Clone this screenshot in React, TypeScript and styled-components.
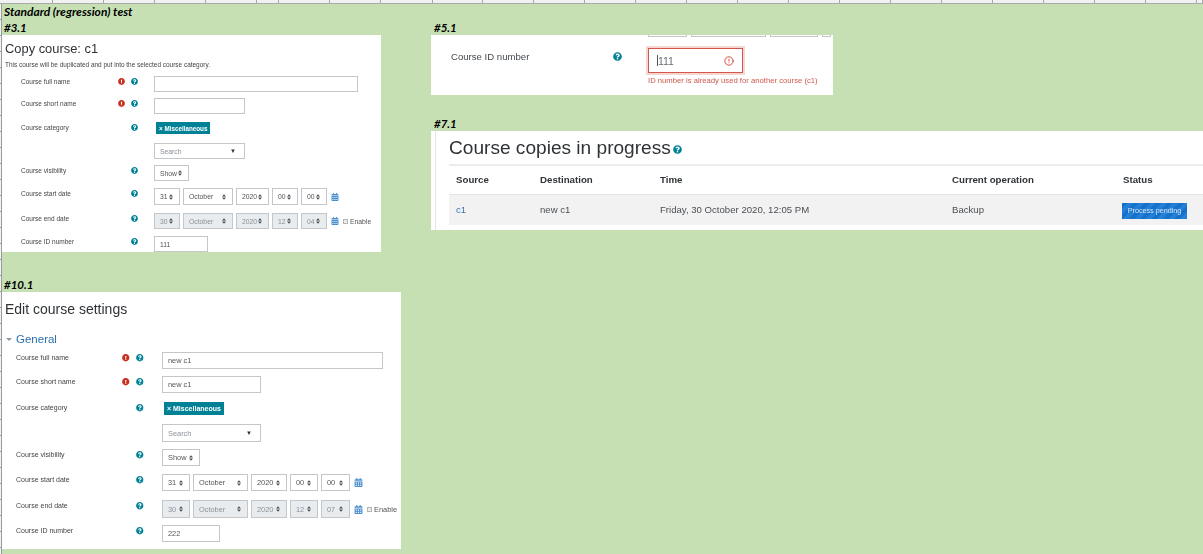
import React from 'react';
import styled, { createGlobalStyle } from 'styled-components';
import { FaCalendarAlt, FaExclamationCircle, FaQuestionCircle } from 'react-icons/fa';
import { FiAlertCircle } from 'react-icons/fi';

const GlobalStyle = createGlobalStyle`
  html, body {
    margin: 0;
    padding: 0;
    background: #fff;
  }
`;

// spreadsheet column widths along the top edge
const COLUMN_WIDTHS = [53, 51, 51, 51, 51, 22, 51, 51, 52, 50, 51, 51, 51, 51, 51, 51, 51, 51, 51, 51, 51, 51, 51, 51, 6];

interface Row {
  label: string;
  mt: number;
  h: number;
  required?: boolean;
  control: React.ReactNode;
}

const Help = () => (
  <HelpIcon>
    <FaQuestionCircle />
  </HelpIcon>
);

const Required = () => (
  <RequiredIcon>
    <FaExclamationCircle />
  </RequiredIcon>
);

const Carets = () => (
  <svg width="4" height="6" viewBox="0 0 5 7">
    <path d="M2.5 0 L5 2.8 H0 Z M2.5 7 L0 4.2 H5 Z" fill="#495057" />
  </svg>
);

const DateFields = (props: { values: string[]; widths: number[]; disabled?: boolean; enable?: boolean }) => (
  <DateRow>
    {props.values.map((value, i) => (
      <SelectBox key={i} $w={props.widths[i]} $disabled={props.disabled}>
        {value}
        <Carets />
      </SelectBox>
    ))}
    <CalendarIcon>
      <FaCalendarAlt />
    </CalendarIcon>
    {props.enable ? (
      <EnableLabel>
        <CheckMark />
        Enable
      </EnableLabel>
    ) : null}
  </DateRow>
);

const CategoryField = (props: { searchW: number; searchH: number }) => (
  <CategoryStack>
    <Badge>× Miscellaneous</Badge>
    <SearchBox $w={props.searchW} $h={props.searchH}>
      Search
      <DownArrow>▼</DownArrow>
    </SearchBox>
  </CategoryStack>
);

const getCopyRows = (): Row[] => {
  const widths = [26, 50, 33, 26, 26];
  return [
    { label: 'Course full name', mt: 7, h: 16, required: true, control: <TextBox $w={204} /> },
    { label: 'Course short name', mt: 6, h: 16, required: true, control: <TextBox $w={91} /> },
    { label: 'Course category', mt: 8, h: 37, control: <CategoryField searchW={91} searchH={16} /> },
    { label: 'Course visibility', mt: 6, h: 16, control: <SelectBox $w={35}>Show<Carets /></SelectBox> },
    { label: 'Course start date', mt: 7, h: 17, control: <DateFields values={['31', 'October', '2020', '00', '00']} widths={widths} /> },
    { label: 'Course end date', mt: 8, h: 16, control: <DateFields values={['30', 'October', '2020', '12', '04']} widths={widths} disabled enable /> },
    { label: 'Course ID number', mt: 7, h: 16, control: <TextBox $w={54}>111</TextBox> },
  ];
};

const getEditRows = (): Row[] => {
  const widths = [28, 55, 36, 28, 29];
  return [
    { label: 'Course full name', mt: 6, h: 17, required: true, control: <TextBox $w={221}>new c1</TextBox> },
    { label: 'Course short name', mt: 7, h: 17, required: true, control: <TextBox $w={99}>new c1</TextBox> },
    { label: 'Course category', mt: 9, h: 40, control: <CategoryField searchW={99} searchH={18} /> },
    { label: 'Course visibility', mt: 7, h: 17, control: <SelectBox $w={38}>Show<Carets /></SelectBox> },
    { label: 'Course start date', mt: 8, h: 17, control: <DateFields values={['31', 'October', '2020', '00', '00']} widths={widths} /> },
    { label: 'Course end date', mt: 9, h: 18, control: <DateFields values={['30', 'October', '2020', '12', '07']} widths={widths} disabled enable /> },
    { label: 'Course ID number', mt: 7, h: 17, control: <TextBox $w={58}>222</TextBox> },
  ];
};

const FormRows = (props: { rows: Row[] }) => (
  <>
    {props.rows.map((row) => (
      <FormRow key={row.label} $mt={row.mt} $h={row.h}>
        <FieldLabel>{row.label}</FieldLabel>
        <IconCell>{row.required ? <Required /> : null}</IconCell>
        <IconCell>
          <Help />
        </IconCell>
        <ControlCell>{row.control}</ControlCell>
      </FormRow>
    ))}
  </>
);

const App = () => {
  return (
    <Sheet>
      <GlobalStyle />
      <ColumnStrip>
        {COLUMN_WIDTHS.map((w, i) => (
          <ColumnCell key={i} style={{ width: w }} />
        ))}
      </ColumnStrip>
      <SheetBody>
        <RowGutter />
        <Canvas>
          <SheetTitle>Standard (regression) test</SheetTitle>
          <Columns>
            <Column>
              <Caption>#3.1</Caption>
              <CopyForm>
                <FormHeading>Copy course: c1</FormHeading>
                <FormIntro>This course will be duplicated and put into the selected course category.</FormIntro>
                <FormRows rows={getCopyRows()} />
              </CopyForm>
              <Caption $mt={25}>#10.1</Caption>
              <EditForm>
                <EditHeading>Edit course settings</EditHeading>
                <GeneralHeading>
                  <GeneralArrow />
                  General
                </GeneralHeading>
                <FormRows rows={getEditRows()} />
              </EditForm>
            </Column>
            <Column>
              <Caption $left={3}>#5.1</Caption>
              <ErrorPanel>
                <ClippedRow>
                  <ClippedBox $w={39} />
                  <ClippedBox $w={75} />
                  <ClippedBox $w={48} />
                  <ClippedBox $w={9} />
                </ClippedRow>
                <ErrorRow>
                  <ErrorLabel>Course ID number</ErrorLabel>
                  <ErrorHelp>
                    <FaQuestionCircle />
                  </ErrorHelp>
                  <div>
                    <InvalidInput>
                      <Cursor />
                      111
                      <InvalidIcon>
                        <FiAlertCircle />
                      </InvalidIcon>
                    </InvalidInput>
                    <ErrorText>ID number is already used for another course (c1)</ErrorText>
                  </div>
                </ErrorRow>
              </ErrorPanel>
              <Caption $left={3} $mt={21}>#7.1</Caption>
              <CopiesPanel>
                <CopiesInner>
                  <CopiesHeading>
                    Course copies in progress
                    <CopiesHelp>
                      <FaQuestionCircle />
                    </CopiesHelp>
                  </CopiesHeading>
                  <CopiesTable>
                    <colgroup>
                      <col style={{ width: 84 }} />
                      <col style={{ width: 120 }} />
                      <col style={{ width: 292 }} />
                      <col style={{ width: 171 }} />
                      <col />
                    </colgroup>
                    <thead>
                      <tr>
                        <HeadCell>Source</HeadCell>
                        <HeadCell>Destination</HeadCell>
                        <HeadCell>Time</HeadCell>
                        <HeadCell>Current operation</HeadCell>
                        <HeadCell>Status</HeadCell>
                      </tr>
                    </thead>
                    <tbody>
                      <tr>
                        <BodyCell>
                          <CourseLink>c1</CourseLink>
                        </BodyCell>
                        <BodyCell>new c1</BodyCell>
                        <BodyCell>Friday, 30 October 2020, 12:05 PM</BodyCell>
                        <BodyCell>Backup</BodyCell>
                        <BodyCell>
                          <PendingBadge>Process pending</PendingBadge>
                        </BodyCell>
                      </tr>
                    </tbody>
                  </CopiesTable>
                </CopiesInner>
              </CopiesPanel>
            </Column>
          </Columns>
        </Canvas>
      </SheetBody>
    </Sheet>
  );
};

export default App;

const Sheet = styled.div`
  width: 1203px;
  height: 554px;
  display: flex;
  flex-direction: column;
  overflow: hidden;
  font-family: 'Liberation Sans', Arial, sans-serif;
`;

const ColumnStrip = styled.div`
  display: flex;
  flex: none;
  height: 4px;
  background: #f2f2f2;
  border-bottom: 1px solid #a9a9a9;
  box-sizing: border-box;
`;

const ColumnCell = styled.div`
  flex: none;
  box-sizing: border-box;
  border-right: 1px solid #a9a9a9;
`;

const SheetBody = styled.div`
  display: flex;
  flex: 1;
  min-height: 0;
`;

const RowGutter = styled.div`
  flex: none;
  width: 2px;
  box-sizing: border-box;
  border-right: 1px solid #9a9a9a;
  background: repeating-linear-gradient(#f2f2f2 0 15px, #9a9a9a 15px 16px);
`;

const Canvas = styled.div`
  flex: 1;
  min-width: 0;
  background: #c6e0b4;
`;

const SheetTitle = styled.div`
  height: 16px;
  padding-left: 2px;
  font: italic 700 12px/16px Lato, sans-serif;
  color: #000;
`;

const Columns = styled.div`
  display: grid;
  grid-template-columns: 429px 1fr;
`;

const Column = styled.div`
  display: flex;
  flex-direction: column;
  align-items: flex-start;
  min-width: 0;
`;

const Caption = styled.div<{ $left?: number; $mt?: number }>`
  height: 15px;
  margin-top: ${(p) => p.$mt || 0}px;
  padding-left: ${(p) => p.$left || 2}px;
  font: italic 700 11.5px/15px Lato, sans-serif;
  color: #000;
`;

const Panel = styled.div`
  background: #fff;
  box-sizing: border-box;
  overflow: hidden;
  filter: blur(0.3px);
`;

const CopyForm = styled(Panel)`
  --label-size: 6.5px;
  --control-size: 6.8px;
  --badge-size: 6.3px;
  --icon-size: 7px;
  --label-col: 113px;
  --icon-col: 13px;
  --control-pad: 13px;
  --cal-size: 8px;
  --badge-h: 12px;
  --label-pad: 19px;
  width: 379px;
  height: 217px;
`;

const EditForm = styled(Panel)`
  --label-size: 7px;
  --control-size: 7.4px;
  --badge-size: 7px;
  --icon-size: 7.5px;
  --label-col: 117px;
  --icon-col: 14px;
  --control-pad: 15px;
  --cal-size: 9px;
  --badge-h: 13px;
  --label-pad: 14px;
  width: 399px;
  height: 257px;
`;

const FormHeading = styled.div`
  margin: 5px 0 0 3px;
  font-size: 12.9px;
  line-height: 17px;
  color: #2f3336;
`;

const FormIntro = styled.div`
  margin: 4px 0 0 3px;
  font-size: 6.45px;
  line-height: 8px;
  color: #444;
`;

const EditHeading = styled.div`
  margin: 8px 0 0 3px;
  font-size: 14px;
  line-height: 18px;
  color: #2f3336;
`;

const GeneralHeading = styled.div`
  display: flex;
  align-items: center;
  margin: 14px 0 0 4px;
  font-size: 11.5px;
  line-height: 14px;
  color: #2a6fb0;
`;

const GeneralArrow = styled.span`
  width: 0;
  height: 0;
  margin-right: 4px;
  border-left: 3px solid transparent;
  border-right: 3px solid transparent;
  border-top: 3px solid #8a9aa5;
`;

const FormRow = styled.div<{ $mt: number; $h: number }>`
  display: grid;
  grid-template-columns: var(--label-col) var(--icon-col) var(--icon-col) 1fr;
  margin-top: ${(p) => p.$mt}px;
  height: ${(p) => p.$h}px;
  color: #373a3c;
`;

const ControlCell = styled.div`
  height: 100%;
  padding-left: var(--control-pad);
`;

const FieldLabel = styled.div`
  padding: 2px 0 0 var(--label-pad);
  font-size: var(--label-size);
  line-height: 8px;
  color: #444;
  white-space: nowrap;
`;

const IconCell = styled.div`
  display: flex;
  justify-content: center;
  padding-top: 2px;
  height: 9px;
`;

const HelpIcon = styled.span`
  display: inline-flex;
  font-size: var(--icon-size);
  color: #008196;
`;

const RequiredIcon = styled(HelpIcon)`
  color: #ca3120;
`;

const TextBox = styled.div<{ $w: number }>`
  width: ${(p) => p.$w}px;
  height: 100%;
  padding-left: 5px;
  box-sizing: border-box;
  display: flex;
  align-items: center;
  border: 1px solid #c4c7ca;
  background: #fff;
  font-size: var(--control-size);
  color: #555;
`;

const SelectBox = styled.div<{ $w: number; $disabled?: boolean }>`
  flex: none;
  display: flex;
  align-items: center;
  justify-content: space-between;
  width: ${(p) => p.$w}px;
  height: 100%;
  padding: 0 6px 0 5px;
  box-sizing: border-box;
  border: 1px solid #c4c7ca;
  background: ${(p) => (p.$disabled ? '#e9ecef' : '#fff')};
  font-size: var(--control-size);
  color: ${(p) => (p.$disabled ? '#8a9097' : '#555')};
`;

const DateRow = styled.div`
  display: flex;
  align-items: center;
  gap: 3px;
  height: 100%;
`;

const CalendarIcon = styled.span`
  display: inline-flex;
  margin-left: 1px;
  font-size: var(--cal-size);
  color: #4a90d0;
`;

const EnableLabel = styled.span`
  display: flex;
  align-items: center;
  gap: 2px;
  margin-left: 1px;
  font-size: var(--control-size);
  color: #555;
`;

const CheckMark = styled.span`
  width: 5px;
  height: 5px;
  border: 1px solid #b5b5b5;
  background: #ececec;
  box-sizing: border-box;
`;

const CategoryStack = styled.div`
  display: flex;
  flex-direction: column;
  align-items: flex-start;
  gap: 9px;
`;

const Badge = styled.span`
  display: inline-flex;
  align-items: center;
  height: var(--badge-h);
  margin-left: 2px;
  padding: 0 3px;
  background: #008196;
  color: #fff;
  font-size: var(--badge-size);
  font-weight: 700;
  white-space: nowrap;
`;

const SearchBox = styled.div<{ $w: number; $h: number }>`
  display: flex;
  align-items: center;
  justify-content: space-between;
  width: ${(p) => p.$w}px;
  height: ${(p) => p.$h}px;
  padding: 0 8px 0 5px;
  box-sizing: border-box;
  border: 1px solid #c4c7ca;
  font-size: var(--control-size);
  color: #8a9097;
`;

const DownArrow = styled.span`
  font-size: 6px;
  color: #333;
`;

const ErrorPanel = styled(Panel)`
  width: 402px;
  height: 60px;
`;

const ClippedRow = styled.div`
  display: flex;
  gap: 4px;
  height: 3px;
  margin-left: 217px;
  overflow: hidden;
`;

const ClippedBox = styled.div<{ $w: number }>`
  width: ${(p) => p.$w}px;
  height: 2px;
  box-sizing: border-box;
  border: 1px solid #c4c7ca;
  border-top: 0;
`;

const ErrorRow = styled.div`
  display: flex;
  align-items: flex-start;
  margin-top: 10px;
  padding-left: 20px;
`;

const ErrorLabel = styled.div`
  width: 162px;
  margin-top: 2px;
  font-size: 9.6px;
  line-height: 13px;
  color: #444a4f;
`;

const ErrorHelp = styled.div`
  display: flex;
  width: 35px;
  margin-top: 4px;
  font-size: 9px;
  color: #008196;
`;

const InvalidInput = styled.div`
  position: relative;
  display: flex;
  align-items: center;
  width: 95px;
  height: 25px;
  padding-left: 8px;
  box-sizing: border-box;
  border: 1px solid #d2564a;
  box-shadow: 0 0 0 2px #f7d6d1;
  font-size: 10.5px;
  color: #6a6f75;
`;

const Cursor = styled.span`
  width: 1px;
  height: 11px;
  background: #555;
`;

const InvalidIcon = styled.span`
  position: absolute;
  right: 8px;
  top: 7px;
  display: inline-flex;
  font-size: 10px;
  color: #ca3120;
`;

const ErrorText = styled.div`
  margin-top: 3px;
  font-size: 7.7px;
  line-height: 10px;
  color: #d0584c;
  white-space: nowrap;
`;

const CopiesPanel = styled(Panel)`
  width: 772px;
  height: 99px;
  padding-left: 4px;
`;

const CopiesInner = styled.div`
  height: 100%;
  padding-left: 13px;
  border-left: 1px solid #e4e4e4;
`;

const CopiesHeading = styled.div`
  display: flex;
  align-items: center;
  height: 33px;
  padding-top: 1px;
  box-sizing: border-box;
  font-size: 19.1px;
  color: #2f3336;
`;

const CopiesHelp = styled.span`
  display: inline-flex;
  margin: 2px 0 0 2px;
  font-size: 9px;
  color: #008196;
`;

const CopiesTable = styled.table`
  width: 100%;
  table-layout: fixed;
  border-collapse: collapse;
  border-top: 2px solid #ececec;
`;

const HeadCell = styled.th`
  height: 29px;
  padding: 0 0 0 7px;
  box-sizing: border-box;
  border-bottom: 1px solid #e4e4e4;
  font-size: 9.7px;
  font-weight: 700;
  text-align: left;
  color: #2f3336;
`;

const BodyCell = styled.td`
  height: 31px;
  padding: 0 0 0 7px;
  box-sizing: border-box;
  background: #f2f2f2;
  font-size: 9.6px;
  color: #4a4f54;
`;

const CourseLink = styled.a`
  color: #3b77b5;
`;

const PendingBadge = styled.span`
  display: inline-block;
  width: 65px;
  height: 16px;
  margin: 2px 0 0 -1px;
  background: repeating-linear-gradient(135deg, #1671cb 0 4px, #2480d6 4px 8px);
  color: #d6e8f8;
  font-size: 7.2px;
  line-height: 16px;
  text-align: center;
  vertical-align: middle;
`;
